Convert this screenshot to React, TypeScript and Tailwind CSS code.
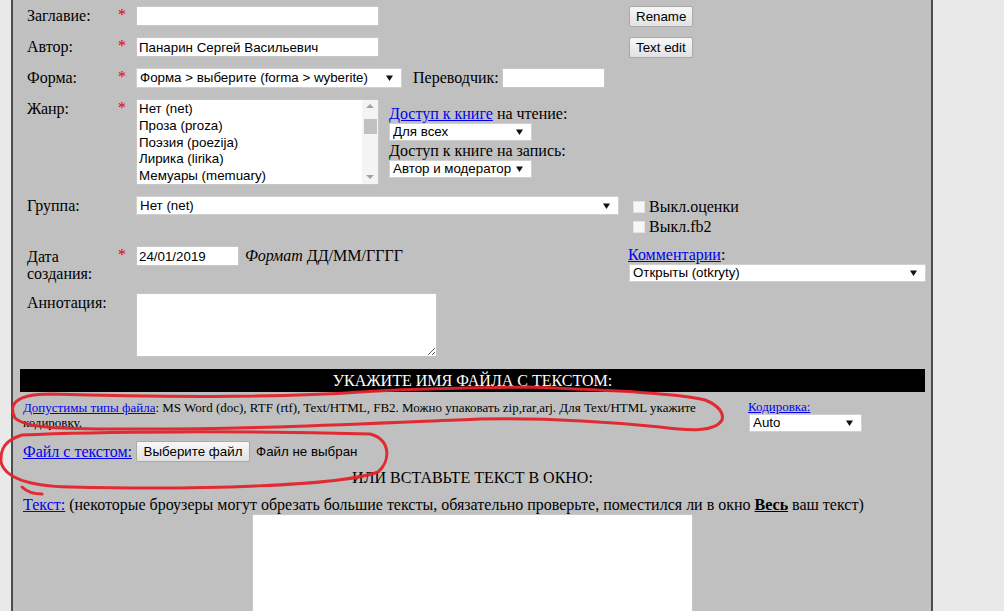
import clsx from 'clsx';

const sans = "font-['Liberation_Sans',Arial,sans-serif] text-[13.33px]";

function Arrow() {
  return (
    <svg width="7" height="6" viewBox="0 0 7 6" className="shrink-0">
      <polygon points="0,0.5 7,0.5 3.5,6" fill="#111" />
    </svg>
  );
}

function Sel({ text, className }: { text: string; className: string }) {
  return (
    <div
      className={clsx(
        'flex items-center justify-between bg-white border border-[#d0d0d0] pl-[3px] pr-[8px] text-black',
        sans,
        className,
      )}
    >
      <span className="truncate">{text}</span>
      <Arrow />
    </div>
  );
}

function Star() {
  return <div className="w-[18px] shrink-0 text-[#e00000] leading-[18px]">*</div>;
}

function Label({ children }: { children: React.ReactNode }) {
  return <div className="w-[91px] shrink-0 pt-[1px] leading-[18px]">{children}</div>;
}

function Btn({ children, className }: { children: React.ReactNode; className?: string }) {
  return (
    <button
      className={clsx(
        'block shrink-0 h-[21px] px-[6px] border border-[#a9a9a9] rounded-[2px] bg-gradient-to-b from-[#f7f7f7] to-[#e2e2e2] text-black leading-none',
        sans,
        className,
      )}
    >
      {children}
    </button>
  );
}

function TextInput({ value, className }: { value?: string; className: string }) {
  return (
    <input
      readOnly
      defaultValue={value}
      className={clsx(
        'block h-[20px] bg-white border border-[#c6c6c6] px-[2px] text-black outline-none',
        sans,
        className,
      )}
    />
  );
}

function Check({ label }: { label: string }) {
  return (
    <div className="flex items-center h-[20px]">
      <span className="ml-[5px] mr-[4px] w-[12px] h-[12px] bg-[#f7f7f7] border border-[#e4e4e4]" />
      <span className="leading-[18px]">{label}</span>
    </div>
  );
}

const genres = ['Нет (net)', 'Проза (proza)', 'Поэзия (poezija)', 'Лирика (lirika)', 'Мемуары (memuary)'];

export default function App() {
  return (
    <div className="relative flex h-[611px] w-[1004px] overflow-hidden bg-[#e9e9e9] font-['Liberation_Serif','Times_New_Roman',serif] text-[16px] text-black">
      <div className="w-[11px] shrink-0" />
      <div className="w-[922px] shrink-0 border-x-2 border-[#4d4d4d] bg-[#c0c0c0]">
        {/* form rows */}
        <div className="flex flex-col gap-[11px] pt-[6px] pl-[14px]">
          <div className="flex items-start h-[20px]">
            <Label>Заглавие:</Label>
            <Star />
            <div className="w-[492px] shrink-0">
              <TextInput className="w-[243px]" />
            </div>
            <Btn className="ml-[1px]">Rename</Btn>
          </div>

          <div className="flex items-start h-[20px]">
            <Label>Автор:</Label>
            <Star />
            <div className="w-[492px] shrink-0">
              <TextInput className="w-[243px]" value="Панарин Сергей Васильевич" />
            </div>
            <Btn className="ml-[1px]">Text edit</Btn>
          </div>

          <div className="flex items-start h-[20px]">
            <Label>Форма:</Label>
            <Star />
            <div className="flex items-center w-[492px] shrink-0">
              <Sel className="w-[266px] h-[20px]" text="Форма > выберите (forma > wyberite)" />
              <span className="ml-[11px] leading-[18px]">Переводчик:</span>
              <TextInput className="ml-[3px] w-[103px]" />
            </div>
          </div>

          <div className="flex items-start">
            <Label>Жанр:</Label>
            <Star />
            <div className="flex items-start w-[492px] shrink-0">
              <div className={clsx('flex w-[243px] h-[86px] bg-white border border-[#c6c6c6]', sans)}>
                <div className="flex-1 pl-[2px] pt-[1px] leading-[16.8px]">
                  {genres.map((g) => (
                    <div key={g}>{g}</div>
                  ))}
                </div>
                <div className="relative w-[16px] bg-[#f4f4f4]">
                  <svg width="16" height="84" viewBox="0 0 16 84" className="absolute inset-0">
                    <polygon points="4,8 12,8 8,4" fill="#a3a3a3" />
                    <rect x="2" y="19" width="13" height="15" fill="#c1c1c1" />
                    <polygon points="4,75 12,75 8,79" fill="#a3a3a3" />
                  </svg>
                </div>
              </div>
              <div className="ml-[10px] pt-[6px] flex flex-col">
                <div className="leading-[18px]">
                  <a className="text-[#0000ee] underline">Доступ к книге</a> на чтение:
                </div>
                <Sel className="w-[143px] h-[18px]" text="Для всех" />
                <div className="leading-[18px] mt-[1px]">Доступ к книге на запись:</div>
                <Sel className="w-[143px] h-[18px]" text="Автор и модератор" />
              </div>
            </div>
          </div>

          <div className="flex items-start h-[39px]">
            <Label>Группа:</Label>
            <div className="w-[18px] shrink-0" />
            <div className="w-[492px] shrink-0">
              <Sel className="w-[483px] h-[19px]" text="Нет (net)" />
            </div>
            <div className="flex flex-col pt-[1px]">
              <Check label="Выкл.оценки" />
              <Check label="Выкл.fb2" />
            </div>
          </div>

          <div className="flex items-start">
            <div className="w-[91px] shrink-0 pt-[2px] leading-[17px]">
              Дата
              <br />
              создания:
            </div>
            <Star />
            <div className="flex items-center w-[492px] shrink-0">
              <TextInput className="w-[103px]" value="24/01/2019" />
              <span className="ml-[6px] leading-[18px]">
                <i>Формат</i> ДД/ММ/ГГГГ
              </span>
            </div>
            <div className="flex flex-col">
              <div className="leading-[18px]">
                <a className="text-[#0000ee] underline">Комментарии</a>:
              </div>
              <Sel className="ml-[1px] w-[297px] h-[18px]" text="Открыты (otkryty)" />
            </div>
          </div>

          <div className="flex items-start">
            <Label>Аннотация:</Label>
            <div className="w-[18px] shrink-0" />
            <textarea readOnly className="block w-[301px] h-[64px] bg-white border border-[#c6c6c6] outline-none" />
          </div>
        </div>

        {/* file section */}
        <div className="ml-[7px] mt-[12px] w-[905px]">
          <div className="h-[23px] bg-black text-white text-center leading-[24px]">УКАЖИТЕ ИМЯ ФАЙЛА С ТЕКСТОМ:</div>

          <div className="flex items-start mt-[7px] pl-[3px]">
            <div className="w-[715px] shrink-0 text-[13px] leading-[15px] pt-[1px]">
              <a className="text-[#0000ee] underline">Допустимы типы файла</a>: MS Word (doc), RTF (rtf), Text/HTML, FB2.
              Можно упаковать zip,rar,arj. Для Text/HTML укажите кодировку.
            </div>
            <div className="ml-[10px] flex flex-col">
              <a className="text-[13px] leading-[15px] text-[#0000ee] underline">Кодировка:</a>
              <Sel className="ml-[1px] w-[113px] h-[18px]" text="Auto" />
            </div>
          </div>

          <div className="flex items-center mt-[9px] pl-[3px]">
            <div className="w-[113px] shrink-0 leading-[18px]">
              <a className="text-[#0000ee] underline">Файл с текстом:</a>
            </div>
            <Btn className="w-[114px]">Выберите файл</Btn>
            <span className={clsx('ml-[6px]', sans)}>Файл не выбран</span>
          </div>

          <div className="mt-[7px] text-center leading-[18px]">ИЛИ ВСТАВЬТЕ ТЕКСТ В ОКНО:</div>

          <div className="mt-[9px] pl-[3px] leading-[18px] whitespace-nowrap">
            <a className="text-[#0000ee] underline">Текст:</a> (некоторые броузеры могут обрезать большие тексты,
            обязательно проверьте, поместился ли в окно{' '}
            <b className="underline">Весь</b> ваш текст)
          </div>

          <textarea readOnly className="block mx-auto w-[441px] h-[200px] bg-white border border-[#c6c6c6] outline-none" />
        </div>
      </div>

      {/* red marker annotations drawn on top of the screenshot */}
      <svg width="1004" height="611" className="pointer-events-none absolute inset-0">
        <g fill="none" stroke="#e3232b" strokeWidth="3" strokeLinecap="round" strokeLinejoin="round" opacity="0.95">
          <path d="M722 420 C715 432, 690 431, 660 427 C600 421, 530 418, 480 419 C380 423, 250 430, 120 429 C60 429, 25 428, 15 418 C8 405, 15 394, 50 394 C150 397, 280 398, 360 392 C420 388, 470 388, 530 387 C600 390, 680 393, 705 400 C720 406, 724 414, 722 420" />
          <path d="M22 435 C100 431, 250 431, 370 434 C392 440, 390 462, 378 472 C340 486, 200 490, 70 487 C30 486, 5 478, 1 462 C0 448, 6 440, 22 435" />
          <path d="M22 487 C26 491, 32 494, 42 494" />
        </g>
      </svg>
    </div>
  );
}
